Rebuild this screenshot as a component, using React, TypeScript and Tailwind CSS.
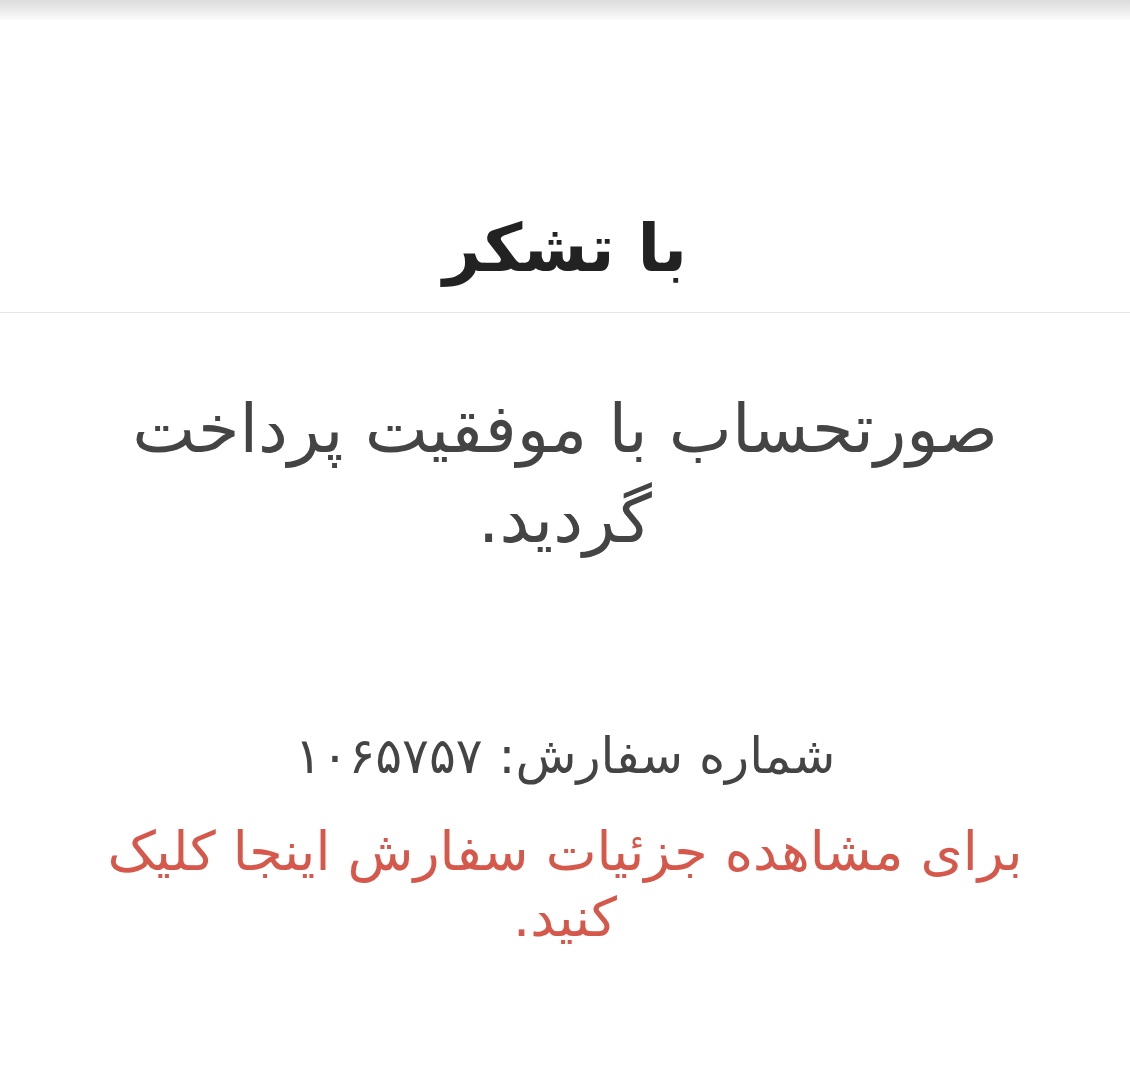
import React from "react";

export default function App() {
  const font = { fontFamily: '"DejaVu Sans", "Noto Sans", sans-serif' };
  return (
    <div dir="rtl" className="min-h-[1080px] w-full bg-white" style={font}>
      <div className="h-[20px] w-full bg-gradient-to-b from-[#dcdcdc] via-[#ebebeb] to-[#fbfbfb]" />
      <div className="flex h-[293px] items-end justify-center border-b border-[#e6e6e6] pb-[30px]">
        <h1 className="text-[66px] font-bold leading-none text-[#222]">با تشکر</h1>
      </div>
      <div className="flex flex-col items-center px-[60px] pt-[71px] text-center">
        <p className="text-[67px] leading-[90px] text-[#444]">
          صورتحساب با موفقیت پرداخت
          <br />
          گردید.
        </p>
        <p className="mt-[162px] text-[50px] leading-[60px] text-[#444]">شماره سفارش: ۱۰۶۵۷۵۷</p>
        <a className="mt-[33px] block cursor-pointer text-[54px] leading-[66px] text-[#d5584b]">
          برای مشاهده جزئیات سفارش اینجا کلیک
          <br />
          کنید.
        </a>
      </div>
    </div>
  );
}
